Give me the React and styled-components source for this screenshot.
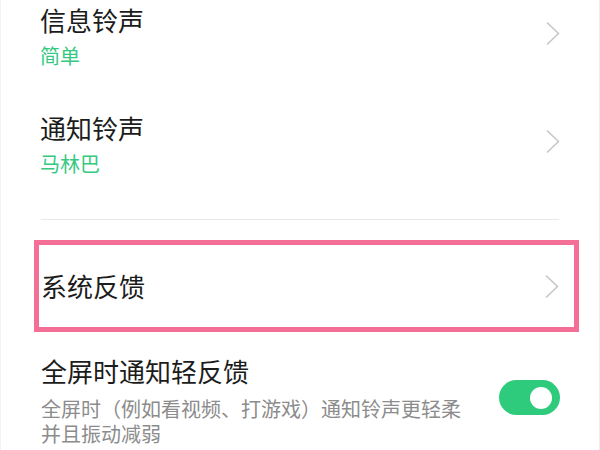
import React from 'react'
import styled, { createGlobalStyle } from 'styled-components'

const GlobalStyle = createGlobalStyle`
    html, body {
        margin: 0;
        padding: 0;
        background: #ffffff;
    }
    body {
        font-family: "Noto Sans CJK SC", "Noto Sans", sans-serif;
        overflow: hidden;
    }
`

const Page = styled.div`
    width: 600px;
    height: 450px;
    box-sizing: border-box;
    overflow: hidden;
    background: #ffffff;
    border-left: 1px solid #f3f3f3;
    border-right: 1px solid #eeeeee;
`

const List = styled.div`
    display: flex;
    flex-direction: column;
    margin-top: -17px;
`

const Row = styled.div`
    display: flex;
    align-items: center;
    justify-content: space-between;
    padding: 20px 39px 20px 39px;
`

const HighlightRow = styled.div`
    display: flex;
    align-items: center;
    justify-content: space-between;
    height: 82px;
    margin: 20px 20px 0 33px;
    padding: 0 15px 0 2px;
    border: 5px solid #f46f95;
`

const TextCol = styled.div`
    display: flex;
    flex-direction: column;
    gap: ${p => p.$gap || 4}px;
    width: ${p => p.$width ? p.$width + 'px' : 'auto'};
`

const Title = styled.div`
    font-size: 26px;
    line-height: 34px;
    color: #1c1c1c;
`

const Value = styled.div`
    font-size: 20px;
    line-height: 30px;
    color: #35c97f;
`

const Desc = styled.div`
    font-size: 20px;
    line-height: 25px;
    color: #8c8c8c;
`

const Divider = styled.div`
    height: 1px;
    margin: 20px 40px 0 40px;
    background: #e9e9e9;
`

const SwitchRow = styled.div`
    display: flex;
    align-items: flex-start;
    justify-content: space-between;
    padding: 22px 39px 20px 40px;
`

const Toggle = styled.div`
    position: relative;
    flex-shrink: 0;
    width: 61px;
    height: 35px;
    margin-top: 26px;
    border-radius: 18px;
    background: ${p => p.$on ? '#2dcb7b' : '#d6d6d6'};
`

const Knob = styled.div`
    position: absolute;
    top: 6.5px;
    left: ${p => p.$on ? '31px' : '8px'};
    width: 22px;
    height: 22px;
    border-radius: 50%;
    background: #ffffff;
`

const ChevronBox = styled.div`
    display: flex;
    flex-shrink: 0;
    margin-bottom: ${p => p.$lift || 0}px;
`

const Chevron = ({ lift }) => (
    <ChevronBox $lift={lift}>
        <svg width="14" height="23" viewBox="0 0 14 23">
            <polyline points="1.5,1 12.5,11.5 1.5,22" fill="none" stroke="#c6c6c6" strokeWidth="1.6" strokeLinecap="round" strokeLinejoin="round" />
        </svg>
    </ChevronBox>
)

export default function App() {
    return (
        <Page>
            <GlobalStyle />
            <List>
                <Row>
                    <TextCol>
                        <Title>信息铃声</Title>
                        <Value>简单</Value>
                    </TextCol>
                    <Chevron lift={8} />
                </Row>
                <Row>
                    <TextCol>
                        <Title>通知铃声</Title>
                        <Value>马林巴</Value>
                    </TextCol>
                    <Chevron lift={8} />
                </Row>
                <Divider />
                <HighlightRow>
                    <Title>系统反馈</Title>
                    <Chevron />
                </HighlightRow>
                <SwitchRow>
                    <TextCol $gap={8} $width={430}>
                        <Title>全屏时通知轻反馈</Title>
                        <Desc>全屏时（例如看视频、打游戏）通知铃声更轻柔并且振动减弱</Desc>
                    </TextCol>
                    <Toggle $on>
                        <Knob $on />
                    </Toggle>
                </SwitchRow>
            </List>
        </Page>
    )
}
